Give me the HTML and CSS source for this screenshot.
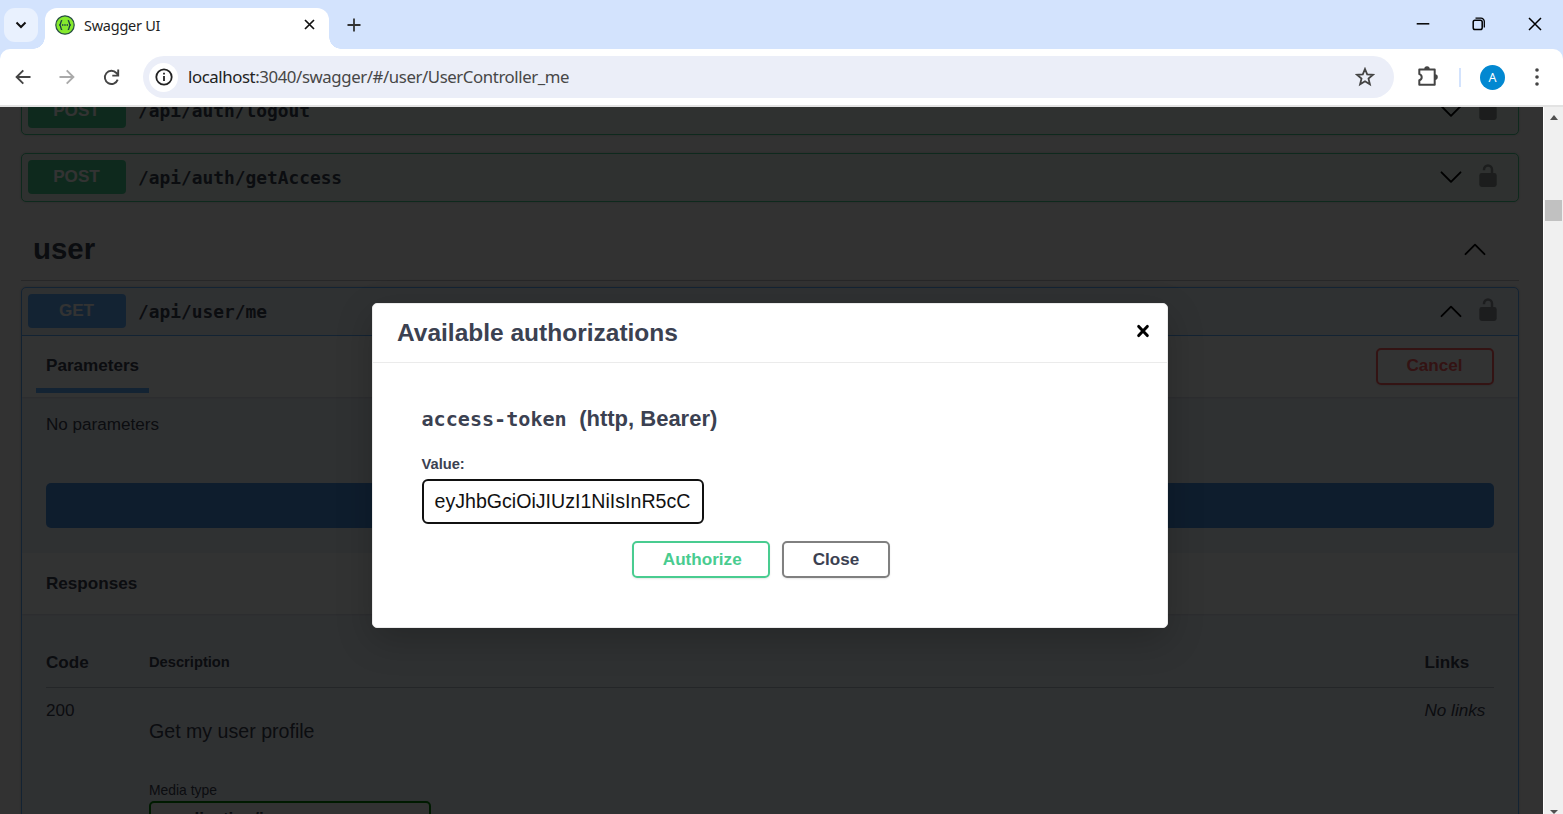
FILE: index.html
```html
<!DOCTYPE html>
<html lang="en">
<head>
<meta charset="utf-8">
<title>Swagger UI</title>
<link rel="stylesheet" href="styles.css">
</head>
<body>
<svg width="0" height="0" class="defs">
  <symbol id="down" viewBox="0 0 24 24"><path d="M2.500 7.300 12 16.800l9.500-9.500" fill="none" stroke="#000" stroke-width="1.900" stroke-linecap="round" stroke-linejoin="round"/></symbol>
  <symbol id="up" viewBox="0 0 24 24"><path d="M2.500 17.200 12 7.700l9.500 9.500" fill="none" stroke="#000" stroke-width="1.900" stroke-linecap="round" stroke-linejoin="round"/></symbol>
  <symbol id="unlock" viewBox="0 0 18 24"><path d="M5 6.200V5.400a4 4 0 0 1 8 0V10" fill="none" stroke="#000" stroke-width="2.500"/><rect x=".3" y="9" width="17.400" height="14" rx="2.400"/></symbol>
</svg>
<div class="window">
  <header class="tabstrip">
    <div class="tab-search"><svg width="12" height="8" viewBox="0 0 12 8"><path d="M1.500 1.500 6 6l4.500-4.500" fill="none" stroke="#111" stroke-width="2"/></svg></div>
    <div class="tab">
      <svg class="favicon" width="20" height="20" viewBox="0 0 20 20"><circle cx="10" cy="10" r="9.200" fill="#85ea2d" stroke="#274d44" stroke-width="1.200"/><path d="M7.200 5.300C5 5.300 6.800 9.500 4.300 10c2.500.5.7 4.700 2.900 4.700M12.800 5.300c2.200 0 .4 4.200 2.900 4.700-2.500.5-.7 4.700-2.900 4.700" fill="none" stroke="#173647" stroke-width="1.300"/><path d="M7 10h1.400M9.300 10h1.400M11.600 10H13" stroke="#173647" stroke-width="1.400"/></svg>
      <span class="tab-title">Swagger UI</span>
      <svg class="tab-close" width="11" height="11" viewBox="0 0 11 11"><path d="m1 1 9 9m0-9-9 9" stroke="#111" stroke-width="1.700"/></svg>
    </div>
    <svg class="new-tab" width="14" height="14" viewBox="0 0 14 14"><path d="M7 .5v13M.5 7h13" stroke="#333" stroke-width="1.800"/></svg>
    <div class="window-buttons">
      <svg width="14" height="14" viewBox="0 0 14 14"><path d="M.7 6.800h12.600" stroke="#000" stroke-width="1.500"/></svg>
      <svg width="14" height="14" viewBox="0 0 14 14"><rect x="1.200" y="3.200" width="9" height="9.300" rx="1.800" fill="none" stroke="#000" stroke-width="1.500"/><path d="M3.500 1.200H9a3.300 3.300 0 0 1 3.300 3.300v6" fill="none" stroke="#000" stroke-width="1.300"/></svg>
      <svg width="14" height="14" viewBox="0 0 14 14"><path d="m1 1 12 12m0-12L1 13" stroke="#000" stroke-width="1.500"/></svg>
    </div>
  </header>
  <div class="toolbar-back"><div class="toolbar">
    <svg class="nav" width="16" height="16" viewBox="0 0 16 16"><path d="M15.500 8H1.800M8.300 1.300 1.600 8l6.700 6.700" fill="none" stroke="#444" stroke-width="1.900"/></svg>
    <svg class="nav" width="16" height="16" viewBox="0 0 16 16"><path d="M.5 8h13.700M7.700 1.300 14.400 8l-6.700 6.700" fill="none" stroke="#aaa" stroke-width="1.900"/></svg>
    <svg class="nav" width="17" height="17" viewBox="0 0 17 17"><path d="M14.700 10.600A6.600 6.600 0 1 1 13.400 4l1.600 2M15.200.6v6H9.300" fill="none" stroke="#444" stroke-width="1.900"/></svg>
    <div class="address">
      <span class="info"><svg width="18" height="18" viewBox="0 0 18 18"><circle cx="9" cy="9" r="7.700" fill="none" stroke="#222" stroke-width="1.800"/><path d="M9 7.900v5M9 4.700v1.900" stroke="#222" stroke-width="1.800"/></svg></span>
      <span class="url"><span class="host">localhost</span>:3040/swagger/#/user/UserController_me</span>
      <svg class="star" width="20" height="20" viewBox="0 0 20 20"><path d="m10 2 2.200 5.400 5.800.4-4.500 3.800 1.400 5.700L10 14.200l-4.900 3.100 1.400-5.700L2 7.800l5.800-.4z" fill="none" stroke="#444" stroke-width="1.800"/></svg>
    </div>
    <svg class="puzzle" width="22" height="22" viewBox="0 0 22 22"><path d="M2.300 3.500h15.400v15.200H2.300v-4.500c3.200-.8 3.200-5.300 0-6.100z" fill="none" stroke="#444" stroke-width="2" stroke-linejoin="round"/><path d="M7.300 3a2.700 2.700 0 0 1 5.400 0zM18 8.300a2.800 2.800 0 0 1 0 5.600z" fill="#444"/></svg>
    <i class="divider"></i>
    <span class="avatar">A</span>
    <svg class="kebab" width="4" height="18" viewBox="0 0 4 18"><circle cx="2" cy="2" r="1.800" fill="#444"/><circle cx="2" cy="9" r="1.800" fill="#444"/><circle cx="2" cy="16" r="1.800" fill="#444"/></svg>
  </div></div>
  <div class="viewport">
    <main class="page">
      <section class="opblock post first"><div class="summary"><span class="method">POST</span><span class="path">/api/auth/logout</span><svg class="arrow"><use href="#down"/></svg><svg class="lock"><use href="#unlock"/></svg></div></section>
      <section class="opblock post"><div class="summary"><span class="method">POST</span><span class="path">/api/auth/getAccess</span><svg class="arrow"><use href="#down"/></svg><svg class="lock"><use href="#unlock"/></svg></div></section>
      <h3 class="tag"><span>user</span><svg class="arrow"><use href="#up"/></svg></h3>
      <section class="opblock get">
        <div class="summary"><span class="method">GET</span><span class="path">/api/user/me</span><svg class="arrow"><use href="#up"/></svg><svg class="lock"><use href="#unlock"/></svg></div>
        <div class="section-header"><h4 class="tab-item">Parameters</h4><button class="btn cancel">Cancel</button></div>
        <div class="parameters"><p class="none">No parameters</p><div class="execute"></div></div>
        <div class="section-header responses"><h4>Responses</h4></div>
        <div class="table">
          <div class="row head"><span>Code</span><span class="desc-head">Description</span><span>Links</span></div>
          <div class="row"><span>200</span><div class="desc"><p>Get my user profile</p><small>Media type</small><div class="select">application/json</div></div><em>No links</em></div>
        </div>
      </section>
      <div class="backdrop">
        <div class="modal">
          <div class="modal-header"><h3>Available authorizations</h3><svg width="14" height="14" viewBox="0 0 14 14"><path d="m2.700 2.400 8.600 9.200m0-9.200-8.600 9.200" stroke="#000" stroke-width="3" stroke-linecap="round"/></svg></div>
          <div class="modal-body">
            <h4><code>access-token</code>(http, Bearer)</h4>
            <label>Value:</label>
            <div class="input">eyJhbGciOiJIUzI1NiIsInR5cC</div>
            <div class="actions"><button class="btn authorize">Authorize</button><button class="btn close">Close</button></div>
          </div>
        </div>
      </div>
    </main>
    <aside class="scrollbar"><i class="tri-up"></i><i class="thumb"></i><i class="tri-down"></i></aside>
  </div>
</div>
</body>
</html>
```
FILE: styles.css
```css
* { box-sizing: border-box; }
body { margin: 0; font-family: "Liberation Sans", Arial, sans-serif; color: #3b4151; overflow: hidden; }
h3, h4, p { margin: 0; }
.defs { position: absolute; }
.window { width: 1563px; height: 814px; display: flex; flex-direction: column; overflow: hidden; }

/* browser frame */
.tabstrip { height: 49px; flex: none; background: #d3e3fd; display: flex; align-items: flex-end; }
.tab-search { width: 34px; height: 34px; margin: 0 7.500px 7.500px 3.500px; border-radius: 11px; background: #e9f1fe; display: flex; align-items: center; justify-content: center; }
.tab { position: relative; width: 284px; height: 41.500px; background: #fff; border-radius: 12px 12px 0 0; display: flex; align-items: center; padding: 0 14px 7px 9.500px; color: #1f1f1f; font: 14.500px "Noto Sans", sans-serif; letter-spacing: -.25px; }
.tab::before, .tab::after { content: ""; position: absolute; bottom: 0; width: 12px; height: 12px; }
.tab::before { left: -12px; background: radial-gradient(circle at 0 0, transparent 11.500px, #fff 12px); }
.tab::after { right: -12px; background: radial-gradient(circle at 100% 0, transparent 11.500px, #fff 12px); }
.tab-title { margin: 0 auto 0 9.500px; }
.new-tab { margin: 0 auto 17.500px 17.500px; }
.window-buttons { display: flex; gap: 42px; padding: 0 21px 18px 0; }
.toolbar-back { flex: none; background: #d3e3fd; }
.toolbar { height: 58px; background: #fff; border-bottom: 2px solid #e3e3e3; border-radius: 10px 10px 0 0; display: flex; align-items: center; padding-left: 15px; }
.nav { margin-right: 28px; }
.nav + .nav + .nav { margin-right: 22.500px; }
.address { width: 1251px; height: 42px; border-radius: 21px; background: #ebeef8; display: flex; align-items: center; padding: 0 18.500px 0 6.500px; }
.info { width: 29px; height: 29px; border-radius: 50%; background: #fff; display: flex; align-items: center; justify-content: center; }
.url { margin: -1px auto 0 10px; font: 16.800px "Noto Sans", sans-serif; letter-spacing: -.41px; color: #474747; white-space: nowrap; }
.host { color: #222; }
.puzzle { margin-left: 23.500px; }
.divider { width: 2px; height: 19px; background: #d3e3fd; margin: 0 19.500px 0 19.500px; }
.avatar { width: 25px; height: 25px; border-radius: 50%; background: #0288d1; color: #fff; font: 12.500px/25px "Noto Sans", sans-serif; text-align: center; }
.kebab { margin-left: 30px; }

/* page */
.viewport { flex: 1; min-height: 0; display: flex; overflow: hidden; }
.page { position: relative; width: 1543px; background: #fafafa; padding: 0 24px 0 20.500px; overflow: hidden; }
.opblock { border: 1.200px solid; border-radius: 5px; margin-bottom: 18px; box-shadow: 0 0 3px rgba(0,0,0,.19); }
.first { margin-top: -21.500px; }
.first .path, .first .method, .first .arrow { margin-top: 1px; }
.post { border-color: #49cc90; background: #e8f5f0; }
.get { border-color: #61affe; background: #ebf3fb; height: 700px; margin: 0; }
.summary { height: 47px; display: flex; align-items: center; padding: 0 21px 0 6px; }
.method { width: 98px; height: 34px; border-radius: 4px; font-weight: 700; font-size: 17.100px; line-height: 34px; text-align: center; color: #fff; background: #49cc90; }
.get .method { background: #61affe; }
.path { margin: 0 auto 0 12.500px; font: 700 17.850px "DejaVu Sans Mono", monospace; }
.arrow { width: 24px; height: 24px; }
.lock { width: 18px; height: 24px; margin: -3px 0 0 16px; opacity: .4; }
.tag { height: 60.500px; border-bottom: 1px solid rgba(59,65,81,.3); margin: 19px 0 6px; display: flex; align-items: center; justify-content: space-between; padding: 0 32.500px 2px 12.500px; font-size: 29.400px; }
.get .summary { border-bottom: 1px solid #61affe; height: 47.500px; padding-bottom: 0; }
.section-header { height: 61.500px; background: rgba(255,255,255,.8); box-shadow: 0 1px 2px rgba(0,0,0,.1); display: flex; align-items: center; justify-content: space-between; padding: 0 24.500px; }
.section-header h4 { font-size: 17.100px; }
.section-header .tab-item { align-self: stretch; line-height: 59px; height: 57px; padding: 0 10px; margin-left: -10px; border-bottom: 5px solid #61affe; }
.responses { padding-top: 1px; }
.btn { height: 36.500px; border: 2.400px solid #808080; border-radius: 5px; background: transparent; font: 700 17.100px "Liberation Sans", sans-serif; color: #3b4151; padding: 0; box-shadow: 0 1px 2px rgba(0,0,0,.1); }
.cancel { width: 118px; border-color: #ff6060; color: #ff6060; }
.parameters { height: 155.500px; padding: 17.500px 24.500px 0; font-size: 17.100px; line-height: 20px; }
.execute { margin-top: 48px; height: 45px; border-radius: 5px; background: #4990e2; }
.table { padding: 34.500px 24.500px; font-size: 17.100px; }
.row { display: grid; grid-template-columns: 103px 1fr 69px; line-height: 20px; padding-top: 13px; }
.head { height: 39.500px; padding-top: 4px; border-bottom: 1px solid rgba(59,65,81,.3); font-weight: 700; }
.desc-head { font-size: 14.700px; line-height: 19px; }
.row em { white-space: nowrap; }
.desc p { font-size: 19.600px; line-height: 24px; margin-top: 18px; }
.desc small { display: block; font-size: 13.900px; line-height: 16px; margin-top: 39px; }
.select { width: 282px; height: 40px; margin-top: 3px; border: 2.400px solid #008000; border-radius: 5px; background: #f7f7f7; font-weight: 700; padding: 6px 13px; }

.backdrop { position: absolute; inset: 0; background: rgba(0,0,0,.8); }
.modal { position: absolute; left: 372px; top: 196px; width: 796px; height: 325px; background: #fff; border: 1px solid #ebebeb; border-radius: 5px; box-shadow: 0 12px 37px rgba(0,0,0,.2); }
.modal-header { height: 59px; border-bottom: 1.200px solid #ebebeb; display: flex; justify-content: space-between; align-items: center; padding: 0 17.500px 0 24px; }
.modal-header svg { margin-bottom: 5px; }
.modal-header h3 { font-size: 24.500px; }
.modal-body { padding: 42px 48.500px 0; display: flex; flex-direction: column; align-items: flex-start; }
.modal-body h4 { font-size: 22px; line-height: 28px; white-space: nowrap; }
.modal-body code { font: 700 20.100px "DejaVu Sans Mono", monospace; margin-right: 12.500px; }
.modal-body label { font-weight: 700; font-size: 14.700px; line-height: 18px; margin-top: 21.500px; }
.input { width: 282.500px; height: 45px; margin-top: 6px; border: 2.400px solid #111; border-radius: 6px; color: #111; font-size: 19.600px; line-height: 41px; padding-left: 11px; white-space: nowrap; }
.actions { display: flex; gap: 12px; margin: 17.500px 0 0 210.500px; }
.authorize { width: 138px; border-color: #49cc90; color: #49cc90; padding-left: 2.500px; }
.actions .btn { padding-top: 1.500px; }

.close { width: 108px; }

.scrollbar { width: 20px; background: #f0f0f0; border-left: 1.500px solid #fff; display: flex; flex-direction: column; align-items: center; }
.tri-up { margin-top: 8px; border: 4.500px solid transparent; border-top: 0; border-bottom: 5px solid #505050; }
.thumb { width: 17px; height: 21px; margin: 80px 0 auto 0; background: #c1c1c1; }
.tri-down { border: 4.500px solid transparent; border-bottom: 0; border-top: 4px solid #505050; }
```
